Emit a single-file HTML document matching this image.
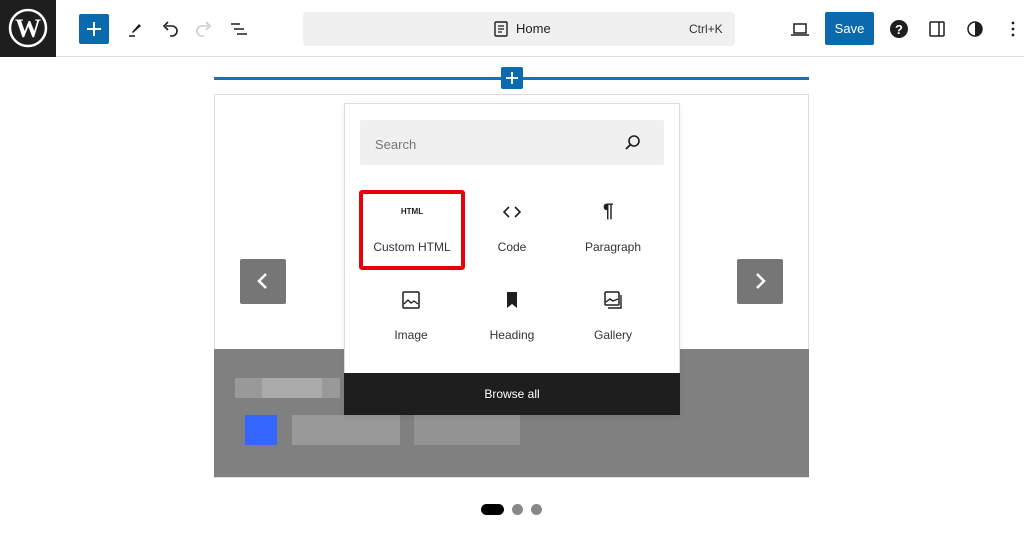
<!DOCTYPE html>
<html><head><style>
*{margin:0;padding:0;box-sizing:border-box}
body{width:1024px;height:538px;background:#fff;font-family:"Liberation Sans",sans-serif;position:relative;overflow:hidden;color:#1e1e1e}
.a{position:absolute}
svg{position:absolute}
</style></head><body>
<div class="a" style="left:0;top:0;width:1024px;height:57px;border-bottom:1px solid #e0e0e0"></div>
<div class="a" style="left:0;top:0;width:56px;height:57px;background:#1e1e1e"></div>
<svg style="left:8px;top:8px" width="40" height="40" viewBox="0 0 40 40"><circle cx="20" cy="20" r="18" fill="none" stroke="#fff" stroke-width="2.5"/><text x="20" y="29" font-family="Liberation Serif" font-size="26" font-weight="bold" fill="#fff" text-anchor="middle">W</text></svg>
<div class="a" style="left:79px;top:14px;width:30px;height:30px;background:#0a6aad;border-radius:2px"></div>
<svg style="left:84px;top:19px" width="20" height="20"><path d="M10 3v14M3 10h14" stroke="#fff" stroke-width="2"/></svg>
<svg style="left:125px;top:19px" width="20" height="20"><path d="M7 13l7-8 2 2-8 7z" fill="#1e1e1e"/><path d="M4 17h6" stroke="#1e1e1e" stroke-width="1.5"/></svg>
<svg style="left:160px;top:19px" width="20" height="20"><path d="M6 7h6a5 5 0 010 10H10M8 3L4 7l4 4" fill="none" stroke="#1e1e1e" stroke-width="1.6"/></svg>
<svg style="left:194px;top:19px" width="20" height="20"><path d="M14 7H8a5 5 0 000 10h2M12 3l4 4-4 4" fill="none" stroke="#ccc" stroke-width="1.6"/></svg>
<svg style="left:229px;top:19px" width="20" height="20"><path d="M2 5h9M5 10h10M8 15h10" stroke="#1e1e1e" stroke-width="1.6"/></svg>
<div class="a" style="left:303px;top:12px;width:432px;height:34px;background:#f0f0f0;border-radius:4px"></div>
<svg style="left:492px;top:20px" width="18" height="18"><rect x="3" y="2" width="12" height="14" rx="1" fill="none" stroke="#1e1e1e" stroke-width="1.4"/><path d="M6 6h6M6 9h6M6 12h4" stroke="#1e1e1e" stroke-width="1.2"/></svg>
<div class="a" style="left:516px;top:21px;font-size:13px">Home</div>
<div class="a" style="left:689px;top:22px;font-size:12px;color:#333">Ctrl+K</div>
<svg style="left:790px;top:19px" width="20" height="20"><rect x="4" y="5" width="12" height="9" fill="none" stroke="#1e1e1e" stroke-width="1.5"/><path d="M1 16h18" stroke="#1e1e1e" stroke-width="1.5"/></svg>
<div class="a" style="left:825px;top:12px;width:49px;height:33px;background:#0a6aad;border-radius:2px;color:#fff;font-size:13px;text-align:center;line-height:33px">Save</div>
<svg style="left:889px;top:19px" width="20" height="20"><circle cx="10" cy="10" r="9" fill="#1e1e1e"/><text x="10" y="15" font-size="13" font-weight="bold" fill="#fff" text-anchor="middle">?</text></svg>
<svg style="left:927px;top:19px" width="20" height="20"><rect x="3" y="3" width="14" height="14" rx="1" fill="none" stroke="#1e1e1e" stroke-width="1.5"/><path d="M12 3v14" stroke="#1e1e1e" stroke-width="1.5"/></svg>
<svg style="left:965px;top:19px" width="20" height="20"><circle cx="10" cy="10" r="7" fill="none" stroke="#1e1e1e" stroke-width="1.5"/><path d="M10 3a7 7 0 010 14z" fill="#1e1e1e"/></svg>
<svg style="left:1003px;top:19px" width="20" height="20"><circle cx="10" cy="4" r="1.4" fill="#1e1e1e"/><circle cx="10" cy="10" r="1.4" fill="#1e1e1e"/><circle cx="10" cy="16" r="1.4" fill="#1e1e1e"/></svg>

<div class="a" style="left:214px;top:77px;width:595px;height:3px;background:#1f6fae"></div>
<div class="a" style="left:501px;top:67px;width:22px;height:22px;background:#0a6aad;border-radius:2px"></div>
<svg style="left:504px;top:70px" width="16" height="16"><path d="M8 2v12M2 8h12" stroke="#fff" stroke-width="1.8"/></svg>

<div class="a" style="left:214px;top:94px;width:595px;height:384px;border:1px solid #ddd"></div>
<div class="a" style="left:214px;top:349px;width:595px;height:128px;background:#808080"></div>
<div class="a" style="left:235px;top:378px;width:105px;height:20px;background:#999"></div>
<div class="a" style="left:262px;top:378px;width:60px;height:20px;background:#aaa"></div>
<div class="a" style="left:245px;top:415px;width:32px;height:30px;background:#3366ff"></div>
<div class="a" style="left:292px;top:415px;width:108px;height:30px;background:#999"></div>
<div class="a" style="left:414px;top:415px;width:106px;height:30px;background:#939393"></div>
<div class="a" style="left:240px;top:259px;width:46px;height:45px;background:#767676;border-radius:2px"></div>
<svg style="left:253px;top:271px" width="20" height="20"><path d="M13 3l-7 7 7 7" fill="none" stroke="#fff" stroke-width="2.5"/></svg>
<div class="a" style="left:737px;top:259px;width:46px;height:45px;background:#767676;border-radius:2px"></div>
<svg style="left:750px;top:271px" width="20" height="20"><path d="M7 3l7 7-7 7" fill="none" stroke="#fff" stroke-width="2.5"/></svg>

<div class="a" style="left:344px;top:103px;width:336px;height:312px;background:#fff;border:1px solid #ddd;box-shadow:0 2px 6px rgba(0,0,0,.08)"></div>
<div class="a" style="left:360px;top:120px;width:304px;height:45px;background:#f0f0f0;border-radius:2px"></div>
<div class="a" style="left:375px;top:137px;font-size:13px;color:#757575">Search</div>
<svg style="left:624px;top:134px" width="18" height="18"><circle cx="10" cy="7" r="5" fill="none" stroke="#1e1e1e" stroke-width="1.6"/><path d="M6.5 10.5L2 15" stroke="#1e1e1e" stroke-width="1.8"/></svg>
<div class="a" style="left:359px;top:190px;width:106px;height:80px;border:4px solid #e8000b;border-radius:3px"></div>
<div class="a" style="left:360px;top:207px;width:104px;text-align:center;font-size:8px;font-weight:bold">HTML</div>
<svg style="left:501px;top:202px" width="22" height="20"><path d="M8 5L3 10l5 5M14 5l5 5-5 5" fill="none" stroke="#1e1e1e" stroke-width="1.6"/></svg>
<div class="a" style="left:603px;top:201px;font-size:19px;font-weight:bold">¶</div>
<svg style="left:401px;top:290px" width="20" height="20"><rect x="2" y="2" width="16" height="16" rx="1" fill="none" stroke="#1e1e1e" stroke-width="1.5"/><path d="M3 14l4-4 3 3 3-2 4 3" fill="none" stroke="#1e1e1e" stroke-width="1.3"/></svg>
<svg style="left:502px;top:290px" width="20" height="20"><path d="M5 2h10v16l-5-4-5 4z" fill="#1e1e1e"/></svg>
<svg style="left:603px;top:290px" width="20" height="20"><rect x="2" y="2" width="14" height="13" rx="1" fill="none" stroke="#1e1e1e" stroke-width="1.5"/><path d="M3 12l4-3 3 2 5-2M5 18h13V5" fill="none" stroke="#1e1e1e" stroke-width="1.4"/></svg>
<div class="a" style="left:360px;top:240px;width:104px;text-align:center;font-size:12px;color:#333">Custom HTML</div>
<div class="a" style="left:462px;top:240px;width:100px;text-align:center;font-size:12px;color:#333">Code</div>
<div class="a" style="left:563px;top:240px;width:100px;text-align:center;font-size:12px;color:#333">Paragraph</div>
<div class="a" style="left:360px;top:328px;width:102px;text-align:center;font-size:12px;color:#333">Image</div>
<div class="a" style="left:462px;top:328px;width:100px;text-align:center;font-size:12px;color:#333">Heading</div>
<div class="a" style="left:563px;top:328px;width:100px;text-align:center;font-size:12px;color:#333">Gallery</div>
<div class="a" style="left:344px;top:373px;width:336px;height:42px;background:#1e1e1e;color:#fff;font-size:12px;text-align:center;line-height:42px">Browse all</div>

<div class="a" style="left:481px;top:504px;width:23px;height:11px;background:#000;border-radius:6px"></div>
<div class="a" style="left:512px;top:504px;width:11px;height:11px;background:#888;border-radius:50%"></div>
<div class="a" style="left:531px;top:504px;width:11px;height:11px;background:#888;border-radius:50%"></div>
</body></html>
